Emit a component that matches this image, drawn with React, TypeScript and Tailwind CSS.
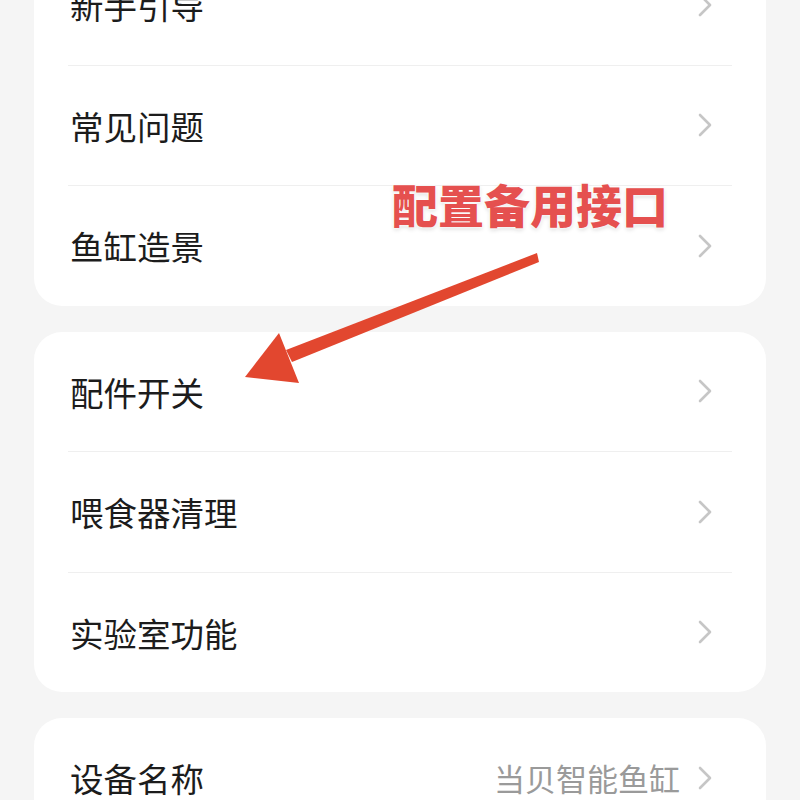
type Row = { label: string; value?: string };

const groups: Row[][] = [
  [{ label: "新手引导" }, { label: "常见问题" }, { label: "鱼缸造景" }],
  [{ label: "配件开关" }, { label: "喂食器清理" }, { label: "实验室功能" }],
  [{ label: "设备名称", value: "当贝智能鱼缸" }],
];

function Chevron() {
  return (
    <svg width="14" height="24" viewBox="0 0 14 24" className="shrink-0" aria-hidden>
      <path d="M2 2 L12 12 L2 22" fill="none" stroke="#c6c6c6" strokeWidth="2.6" strokeLinecap="round" strokeLinejoin="round" />
    </svg>
  );
}

function SettingsCard({ rows }: { rows: Row[] }) {
  return (
    <div className="rounded-[28px] bg-white px-[34px]">
      {rows.map((row, i) => (
        <div key={row.label}>
          {i > 0 && <div className="h-px bg-[#efefef]" />}
          <div className="flex h-[119.5px] items-center justify-between pl-[2px] pr-[20px]">
            <span className="text-[33.5px] leading-none text-[#1c1c1c]">{row.label}</span>
            <div className="flex items-center gap-[18px]">
              {row.value && <span className="text-[31px] leading-none text-[#9a9a9a]">{row.value}</span>}
              <Chevron />
            </div>
          </div>
        </div>
      ))}
    </div>
  );
}

export default function App() {
  return (
    <div
      className="relative h-[800px] w-[800px] overflow-hidden bg-[#f5f5f5]"
      style={{ fontFamily: '"Noto Sans CJK SC", "Noto Sans", sans-serif' }}
    >
      <div className="-mt-[55px] flex flex-col gap-[26px] px-[34px]">
        {groups.map((rows, i) => (
          <SettingsCard key={i} rows={rows} />
        ))}
      </div>

      {/* annotation overlay */}
      <div
        className="absolute left-[392px] top-[180px] text-[46px] font-black leading-none text-[#e5504f]"
        style={{ textShadow: "0 0 3px #fff, 0 0 3px #fff, 0 2px 4px rgba(0,0,0,0.15)" }}
      >
        配置备用接口
      </div>
      <svg className="absolute left-0 top-0" width="800" height="800" aria-hidden>
        <polygon points="537,253 539,262 292,362 286,350" fill="#e2472f" />
        <polygon points="245,377 279,333 299,383" fill="#e2472f" />
      </svg>
    </div>
  );
}
